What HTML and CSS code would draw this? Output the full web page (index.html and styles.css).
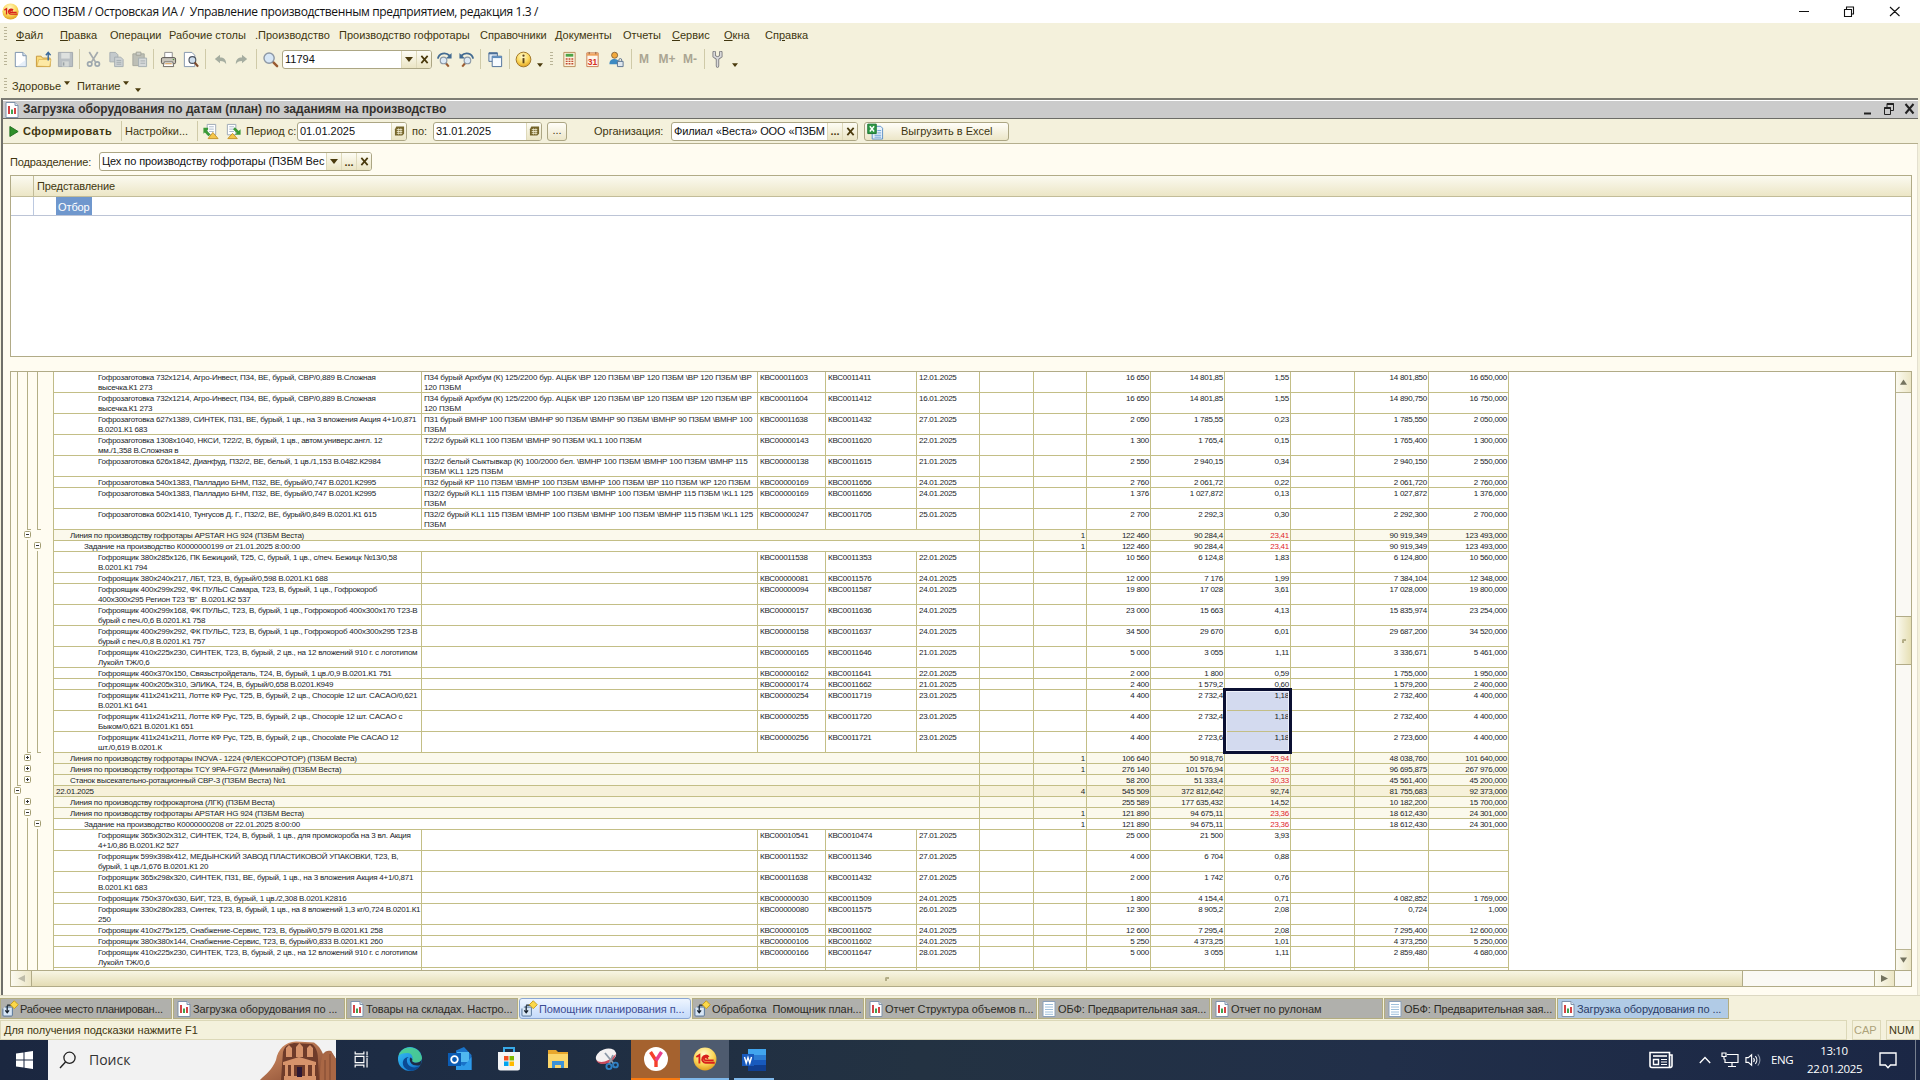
FILE: index.html
```
<!DOCTYPE html>
<html lang="ru">
<head>
<meta charset="utf-8">
<title>Управление производственным предприятием</title>
<link rel="stylesheet" href="styles.css">
</head>
<body>
<svg class="sprite" width="0" height="0">
  <defs>
    <radialGradient id="gold" cx="45%" cy="30%" r="70%"><stop offset="0" stop-color="#fffbd0"/><stop offset=".6" stop-color="#fbd75a"/><stop offset="1" stop-color="#e0a020"/></radialGradient>
    <linearGradient id="edgeg" x1="0" y1="0" x2="1" y2="1"><stop offset="0" stop-color="#35c1f1"/><stop offset=".6" stop-color="#1f8fe0"/><stop offset="1" stop-color="#0c59a4"/></linearGradient>
    <linearGradient id="rock" x1="0" y1="0" x2="1" y2="1"><stop offset="0" stop-color="#d99468"/><stop offset="1" stop-color="#7c412b"/></linearGradient>
  </defs>
  <symbol id="i-1c" viewBox="0 0 18 18"><circle cx="9" cy="9" r="8.6" fill="url(#gold)"/><path d="M2.500 7.500 4.800 6V12.300M11.800 7.500a2.700 2.700 0 1 0-2 4.300h6.500M10.800 9a1.200 1.200 0 1 0-1.300 1h6" fill="none" stroke="#d8201c" stroke-width="1.400"/></symbol>
  <symbol id="i-report" viewBox="0 0 16 16"><path d="M2 .5h9L14 3.500V15.500H2z" fill="#fff" stroke="#7f93ab"/><path d="M11 .5V3.500h3" fill="#dfe8f2" stroke="#7f93ab"/><path d="M5 4v8" stroke="#d03030" stroke-width="1.800"/><path d="M8 7.500V12" stroke="#2c9a3c" stroke-width="1.800"/><path d="M11 6v6" stroke="#d03030" stroke-width="1.800"/></symbol>
  <symbol id="i-doc" viewBox="0 0 16 16"><path d="M2 .5h12v15H2z" fill="#fff" stroke="#8aa0ba"/><path d="M4 3.500h8M4 6h8M4 8.500h8M4 11h8M4 13.300h8" stroke="#9fc0dc"/></symbol>
  <symbol id="i-proc" viewBox="0 0 18 18"><path d="M3 7.500h8v8.500a1 1 0 0 1-1 1H2a1 1 0 0 1-1-1V9" fill="#d8e6f5" stroke="#527298"/><path d="M5.500 6v7M3.500 11l2 2.500 2-2.500M5.500 5.500h5" fill="none" stroke="#15202c" stroke-width="1.300"/><path d="M13 .8 17.200 5 13 9.200 8.800 5z" fill="#fbd84a" stroke="#c79c1c"/></symbol>
  <symbol id="i-new" viewBox="0 0 18 18"><path d="M3.500 1.500h8l3.500 3.500v11.500H3.500z" fill="#fff" stroke="#7890ac"/><path d="M11.500 1.500V5H15" fill="#d5e2f0" stroke="#7890ac"/><path d="M5 16.500h10V9z" fill="#dce8f6" opacity=".7"/></symbol>
  <symbol id="i-open" viewBox="0 0 18 18"><path d="M1.500 5.500h5l1.500 2h8v9H1.500z" fill="#fbdc7a" stroke="#c7983a"/><path d="M2 16 4 9h13l-1.500 7.500z" fill="#fde9a4" stroke="#d3a743" stroke-width=".6"/><path d="M14 10V2M11.500 4.500 14 1.500l2.500 3" fill="none" stroke="#39699c" stroke-width="1.500"/></symbol>
  <symbol id="i-save" viewBox="0 0 18 18"><path d="M1.500 1.500h15v15h-15z" fill="#b9bfc3" stroke="#a2a9ad"/><path d="M4.500 2h9v6h-9z" fill="#dee1df"/><path d="M5.500 11h7v5.500h-7z" fill="#d4d8d6"/><path d="M7 12v3.500" stroke="#9aa2a6" stroke-width="1.600"/></symbol>
  <symbol id="i-cut" viewBox="0 0 18 18"><path d="M4.500 1 11 11.500M13.500 1 7 11.500" stroke="#a5abae" stroke-width="1.800"/><circle cx="5" cy="13.800" r="2.300" fill="none" stroke="#9da7ae" stroke-width="1.800"/><circle cx="13" cy="13.800" r="2.300" fill="none" stroke="#9da7ae" stroke-width="1.800"/></symbol>
  <symbol id="i-copy" viewBox="0 0 18 18"><path d="M2 1.500h6l2.500 2.500v7.500H2z" fill="#c4cacc" stroke="#a5adb1"/><path d="M7 6.500h6.500L16 9v7.500H7z" fill="#ccd1d3" stroke="#a5adb1"/><path d="M9 10h5M9 12h5M9 14h5" stroke="#a5adb1"/></symbol>
  <symbol id="i-paste" viewBox="0 0 18 18"><path d="M2 3h12v12.500H2z" fill="#bdbfb6" stroke="#a6a89d"/><path d="M5.500 1.200h5V4.500h-5z" fill="#cfd1cb" stroke="#a1a398"/><path d="M8 7.500h8.500v9H8z" fill="#d6d9d9" stroke="#a7afb3"/><path d="M10 10.500h5M10 13h5" stroke="#a7afb3"/></symbol>
  <symbol id="i-print" viewBox="0 0 18 18"><path d="M5 1.500h8V8H5z" fill="#fff" stroke="#8b8b8b"/><rect x="1.500" y="7" width="15" height="6.500" rx="1.500" fill="#c9c5bb" stroke="#54504a"/><path d="M4.500 11.500h9l1 5h-11z" fill="#fff" stroke="#6b675e"/><path d="M5.500 13.500h7" stroke="#d18f3e"/><path d="M13.500 9h1.500" stroke="#4e9c3c" stroke-width="1.300"/></symbol>
  <symbol id="i-preview" viewBox="0 0 18 18"><path d="M2.500 1.500h8l3 3v12H2.500z" fill="#fff" stroke="#8296ad"/><circle cx="11" cy="9.500" r="3.600" fill="#cfdfee" stroke="#4d5560" stroke-width="1.200"/><path d="M13.500 12.200 17 16.500" stroke="#7d4a2d" stroke-width="2.200"/></symbol>
  <symbol id="i-undo" viewBox="0 0 18 18"><path d="M3 8.500 8.500 4v3c4 0 6.500 2 6.500 7-1.500-2.500-3-3.500-6.500-3.500V13z" fill="#a5ada0"/></symbol>
  <symbol id="i-mag" viewBox="0 0 18 18"><path d="M11.500 11.500 16 16" stroke="#9a5b31" stroke-width="2.600" stroke-linecap="round"/><circle cx="7.500" cy="7.500" r="5.400" fill="#d7e7f6" stroke="#8d98a5" stroke-width="1.500"/></symbol>
  <symbol id="i-find" viewBox="0 0 18 18"><path d="M2 8C3 2.500 10 .5 14.500 5" fill="none" stroke="#436b92" stroke-width="2"/><path d="M16.500 2v6h-6z" fill="#436b92"/><path d="m10.500 13 3 3.500" stroke="#9a5b31" stroke-width="2.200"/><circle cx="8" cy="10" r="3.500" fill="#dce9f5" stroke="#8b98a6" stroke-width="1.200"/></symbol>
  <symbol id="i-wins" viewBox="0 0 18 18"><path d="M2 2h9v9H2z" fill="#e3edf8" stroke="#4c6f98"/><path d="M2 2.500h9" stroke="#4c6f98" stroke-width="2"/><path d="M5.500 5.500h10v11h-10z" fill="#f7fbff" stroke="#4c6f98"/><path d="M5.500 6.500h10" stroke="#5f8dbd" stroke-width="2"/></symbol>
  <symbol id="i-info" viewBox="0 0 18 18"><circle cx="9" cy="9" r="7.800" fill="url(#gold)" stroke="#9c7428"/><path d="M9 7.500v5.500" stroke="#5d421a" stroke-width="2"/><circle cx="9" cy="4.900" r="1.200" fill="#5d421a"/></symbol>
  <symbol id="i-calc" viewBox="0 0 18 18"><path d="M3 1.500h12v15H3z" fill="#fbf3dd" stroke="#b98d5a"/><path d="M5 3h8v3H5z" fill="#4da347"/><path d="M5 8.500h8M5 11h8M5 13.500h8" stroke="#c24b31" stroke-width="1.500" stroke-dasharray="2 1"/></symbol>
  <symbol id="i-cal" viewBox="0 0 18 18"><path d="M3 2h12v14.500H3z" fill="#fff6ec" stroke="#c97c51"/><path d="M3 2.500h12v2.500H3z" fill="#f0a35e"/><path d="M5.500 1v2.500M12.500 1v2.500" stroke="#8d5d38"/><text x="9" y="14.500" text-anchor="middle" font-family="Liberation Sans" font-size="9" font-weight="700" fill="#d42f22">31</text></symbol>
  <symbol id="i-user" viewBox="0 0 18 18"><circle cx="7" cy="4.500" r="3.200" fill="#f2a93c" stroke="#6e5330" stroke-width=".8"/><path d="M1.500 14c0-4 2-5.500 5.500-5.500 2 0 4 1 4.500 3V14z" fill="#3d8ac2"/><path d="M10 11h6v5.500h-6z" fill="#dfe7ee" stroke="#5b7390"/><path d="M11.500 11V9.500a1.500 1.500 0 0 1 3 0V11" fill="none" stroke="#5b7390"/></symbol>
  <symbol id="i-wrench" viewBox="0 0 18 18"><path d="M5.500 1.500v4L9 8l3.500-2.500v-4M9 8v8" fill="none" stroke="#77777a" stroke-width="3.600" stroke-linecap="round"/><path d="M5.500 1.500v4L9 8l3.500-2.500v-4M9 8v8" fill="none" stroke="#d9d9da" stroke-width="1.800" stroke-linecap="round"/></symbol>
  <symbol id="i-load" viewBox="0 0 18 18"><path d="M5.500 1.500h9v11h-9z" fill="#fff" stroke="#9aa7b5"/><path d="M7.500 4h5M7.500 6.500h5M7.500 9h5" stroke="#a8b8c8"/><path d="M1.500 5h5v2L5 8l4 4-2 2-4-4-1.500 1.500z" fill="#3a9a37"/><path d="m11.500 10 5.500 6.500H6.500z" fill="#f5c64a" stroke="#c39329"/></symbol>
  <symbol id="i-unload" viewBox="0 0 18 18"><path d="M2.500 1.500h9v11h-9z" fill="#fff" stroke="#9aa7b5"/><path d="M4.500 4h5M4.500 6.500h5M4.500 9h5" stroke="#a8b8c8"/><path d="M16.500 12.500h-6l2-2-4-4 2-2 4 4 2-2z" fill="#3a9a37"/><path d="m8 11 5 5.500H3z" fill="#f5c64a" stroke="#c39329"/></symbol>
  <symbol id="i-date" viewBox="0 0 12 12"><path d="M2.500 1H11v8L9 11H1V4z" fill="#75652a"/><path d="M3 4.500h6M3 6.500h6M3 8.500h6" stroke="#f2ecd0"/><path d="M5 3v7M7.500 3v7" stroke="#f2ecd0" stroke-width=".7"/></symbol>
  <symbol id="i-excel" viewBox="0 0 18 18"><path d="M5.500 3.500h9l2 2v11.500h-11z" fill="#e8f1fa" stroke="#5b8fc7"/><path d="M11 8h4M11 10.500h4M8 13h7M8 15h7" stroke="#6aa0d6"/><path d="M.8 1.200h9v10h-9z" fill="#2f9a47" stroke="#1b7231"/><path d="m3 3.500 4.500 5.500M7.500 3.500 3 9" stroke="#fff" stroke-width="1.500"/></symbol>
  <symbol id="i-x" viewBox="0 0 10 10"><path d="m1.500 1 7 8M8.500 1l-7 8" stroke="#4b3b0e" stroke-width="1.900"/></symbol>
  <symbol id="i-down" viewBox="0 0 8 5"><path d="M0 0h8L4 5z" fill="#4b3b0e"/></symbol>
</svg>

<div class="caption">
  <svg class="ic18"><use href="#i-1c"/></svg>
  <span class="caption-text">ООО ПЗБМ / Островская ИА /&nbsp; Управление производственным предприятием, редакция 1.3 /</span>
  <svg class="caption-buttons" viewBox="0 0 120 22"><g fill="none" stroke="#111" stroke-width="1.100"><path d="M12 10.500h10M57.500 8.500h7v7h-7zM59.500 8V6h7v7h-2M103 6l9.500 9M112.500 6l-9.500 9"/></g></svg>
</div>

<div class="menu">
  <i class="grip"></i><span><u>Ф</u>айл</span><span><u>П</u>равка</span><span>Операции</span><span>Рабочие столы</span><span>.Производство</span><span>Производство гофротары</span><span>Справочники</span><span><u>Д</u>окументы</span><span>Отчеты</span><span><u>С</u>ервис</span><span><u>О</u>кна</span><span>Сп<u>р</u>авка</span>
</div>

<div class="tools">
  <i class="grip"></i>
  <svg><use href="#i-new"/></svg><svg><use href="#i-open"/></svg><svg><use href="#i-save"/></svg><i class="sep"></i>
  <svg><use href="#i-cut"/></svg><svg><use href="#i-copy"/></svg><svg><use href="#i-paste"/></svg><i class="sep"></i>
  <svg><use href="#i-print"/></svg><svg><use href="#i-preview"/></svg><i class="sep"></i>
  <svg><use href="#i-undo"/></svg><svg class="flip"><use href="#i-undo"/></svg><i class="sep"></i>
  <svg><use href="#i-mag"/></svg>
  <div class="field"><span class="value">11794</span><b class="btn"><svg class="down"><use href="#i-down"/></svg></b><b class="btn"><svg class="x"><use href="#i-x"/></svg></b></div>
  <svg><use href="#i-find"/></svg><svg class="flip"><use href="#i-find"/></svg><i class="sep"></i>
  <svg><use href="#i-wins"/></svg><i class="sep"></i><svg><use href="#i-info"/></svg>
  <svg class="more"><use href="#i-down"/></svg><i class="grip"></i>
  <svg><use href="#i-calc"/></svg><svg><use href="#i-cal"/></svg><svg><use href="#i-user"/></svg><i class="sep"></i>
  <b class="mem">M</b><b class="mem">M+</b><b class="mem">M-</b><i class="sep"></i>
  <svg><use href="#i-wrench"/></svg><svg class="more"><use href="#i-down"/></svg>
</div>

<div class="extra">
  <i class="grip"></i><span>Здоровье</span><svg class="drop"><use href="#i-down"/></svg><span>Питание</span><svg class="drop"><use href="#i-down"/></svg><svg class="more"><use href="#i-down"/></svg>
</div>

<div class="window">
  <div class="window-title">
    <svg class="ic16"><use href="#i-report"/></svg><b>Загрузка оборудования по датам (план) по заданиям на производство</b>
    <svg class="window-buttons" viewBox="0 0 60 16"><path d="M6 12.500h7" stroke="#222" stroke-width="2"/><path d="M26.500 6.500h6v7h-6zM29 6V2.500h6.500v7H33" fill="none" stroke="#222"/><path d="M26.500 7h6M29 3h6.500" stroke="#222" stroke-width="2"/><path d="m47.500 3 8 9.500M55.500 3l-8 9.500" stroke="#222" stroke-width="2"/></svg>
  </div>
  <div class="commands">
    <svg class="play" viewBox="0 0 10 12"><path d="M.5.5 9.500 6 .5 11.500z" fill="#2f8f28" stroke="#1d6d1c"/></svg>
    <b class="run">Сформировать</b><i class="sep"></i><span class="settings">Настройки...</span><i class="sep"></i>
    <svg class="ic18"><use href="#i-load"/></svg><svg class="ic18"><use href="#i-unload"/></svg>
    <span>Период с:</span>
    <div class="field"><span class="value">01.01.2025</span><b class="btn"><svg class="date"><use href="#i-date"/></svg></b></div>
    <span class="to">по:</span>
    <div class="field"><span class="value">31.01.2025</span><b class="btn"><svg class="date"><use href="#i-date"/></svg></b></div>
    <div class="push dots">...</div>
    <span class="org">Организация:</span>
    <div class="field tight"><span class="value">Филиал «Веста» ООО «ПЗБМ</span><b class="btn">...</b><b class="btn"><svg class="x"><use href="#i-x"/></svg></b></div>
    <div class="push excel"><svg class="ic18"><use href="#i-excel"/></svg><span>Выгрузить в Excel</span></div>
  </div>
  <div class="form">
    <div class="dept"><span>Подразделение:</span>
      <div class="field tight"><span class="value">Цех по производству гофротары (ПЗБМ Вес</span><b class="btn"><svg class="down"><use href="#i-down"/></svg></b><b class="btn">...</b><b class="btn"><svg class="x"><use href="#i-x"/></svg></b></div>
    </div>
    <div class="filter">
      <div class="filter-head"><span></span><span>Представление</span></div>
      <div class="filter-row"><span></span><div><em>Отбор</em></div></div>
    </div>
    <div class="report">
      <div class="gutter"><svg width="42" height="598">
        <g fill="none" stroke="#b3ae86" shape-rendering="crispEdges">
          <path d="M6.500 0V413.500H10M6.500 424V598M16.500 0V157.500H20M26.500 0V157.500H30M16.500 168V380.500H20M26.500 179V380.500H30M16.500 446V598M26.500 457V598"/>
        </g>
        <g id="nodes"></g>
      </svg></div>
      <div class="sheet"><div id="rows"></div><i class="selection"></i></div>
      <div class="vscroll"><b class="arrow"><svg viewBox="0 0 8 6"><path d="M0 6h8L4 0z" fill="#74735f"/></svg></b><b class="thumb"><i class="nub"></i></b><b class="arrow"><svg viewBox="0 0 8 6"><path d="M0 0h8L4 6z" fill="#74735f"/></svg></b></div>
      <div class="hscroll"><b class="arrow"><svg viewBox="0 0 8 8"><path d="M8 0v8L0 4z" fill="#bdbba8"/></svg></b><b class="thumb"><i class="nub"></i></b><i></i><b class="arrow"><svg viewBox="0 0 8 8"><path d="M0 0v8l8-4z" fill="#74735f"/></svg></b><i class="corner"></i></div>
    </div>
  </div>
</div>

<div class="tabs">
  <div><svg class="ic18"><use href="#i-proc"/></svg><span class="narrow">Рабочее место планирован...</span></div>
  <div><svg class="ic16"><use href="#i-report"/></svg><span>Загрузка оборудования по ...</span></div>
  <div><svg class="ic16"><use href="#i-report"/></svg><span>Товары на складах. Настро...</span></div>
  <div class="hot"><svg class="ic18"><use href="#i-proc"/></svg><span>Помощник планирования п...</span></div>
  <div><svg class="ic18"><use href="#i-proc"/></svg><span>Обработка&nbsp; Помощник план...</span></div>
  <div><svg class="ic16"><use href="#i-report"/></svg><span>Отчет Структура объемов п...</span></div>
  <div><svg class="ic16"><use href="#i-doc"/></svg><span>ОБФ: Предварительная зая...</span></div>
  <div><svg class="ic16"><use href="#i-report"/></svg><span>Отчет по рулонам</span></div>
  <div><svg class="ic16"><use href="#i-doc"/></svg><span>ОБФ: Предварительная зая...</span></div>
  <div class="current"><svg class="ic16"><use href="#i-report"/></svg><span>Загрузка оборудования по ...</span></div>
</div>
<div class="status"><span class="hint">Для получения подсказки нажмите F1</span><span class="cap">CAP</span><span class="num">NUM</span></div>

<div class="taskbar">
  <div class="start"><svg width="18" height="18" viewBox="0 0 18 18"><path d="M0 2.500 7.500 1.500V8.500H0zM8.500 1.300 17 0V8.500H8.500zM0 9.500h7.500v7L0 15.500zM8.500 9.500H17V18L8.500 16.700z" fill="#fff"/></svg></div>
  <div class="search">
    <svg width="18" height="18" viewBox="0 0 18 18"><circle cx="10.500" cy="6.800" r="5.600" fill="none" stroke="#222" stroke-width="1.300"/><path d="M6.500 11 1 17" stroke="#222" stroke-width="1.400"/></svg>
    <span>Поиск</span>
    <svg class="petra" width="78" height="40" viewBox="0 0 78 40"><path d="M2 40C8 34 14 30 18 20 20 9 27 2 38 1.500l18 1C60 5 63 9 65 14c2-3 5-4 8-3l5 8v21z" fill="url(#rock)"/><path d="M23 40 25 12C27 5 31 4 36 3l18 1c5 4 6 10 6 16l1 20z" fill="#6f3b2a"/><g fill="#d7936b"><path d="M26 36h32v4H26zM25 22l16-5 17 5v3H25zM28 8l3-3 3 3v9h-6zM49 8l3-3 3 3v9h-6zM38 7l3.500-4L45 7v10h-7z"/><path d="M27 25h3v12h-3zM33 25h3v12h-3zM47 25h3v12h-3zM54 25h3v12h-3z"/></g><path d="M39 27h5v10h-5z" fill="#2c1834"/><path d="M65 14c-3 8-3 18-3 26h16V19l-5-8z" fill="#a96745"/><path d="M67 20v20M72 14v26" stroke="#7f4931"/></svg>
  </div>
  <div class="apps">
    <div><svg class="view" viewBox="0 0 24 24"><path d="M4 2v3h11V2M4 22v-3h11v3M4 8h11v8H4zM19 2v5M19 10v12M17.500 8.500h3" fill="none" stroke="#fff" stroke-width="1.500"/></svg></div>
    <div><svg viewBox="0 0 24 24"><circle cx="12" cy="12" r="12" fill="url(#edgeg)"/><path d="M.5 9C3-2.500 22-3 24 11c0 5-8 6-10 3 2-5-1-8-5-8C5 6 2 7 .5 9z" fill="#4fd18b" opacity=".85"/><path d="M9 12c-1 6 5 11 13 7-4 6-12 6-16 1-3-5 0-10 5-10-1 0-2 1-2 2z" fill="#0b4a94"/><path d="M12 10.500c2 .5 3 2 2 3.500 2 3 9 2 10-2l-1.500 6c-7 2-12-2-10.500-7.500z" fill="#1e2b44"/></svg></div>
    <div><svg viewBox="0 0 24 24"><path d="M8 3.500 16 0l7.500 8v15H8z" fill="#1a73c9"/><path d="M9 5h12v10H9z" fill="#50b8f0"/><path d="M8 15l8 4 7.500-9V23H8z" fill="#2e9be8"/><path d="M0 6h13v13H0z" fill="#0b5cb4"/><circle cx="6.500" cy="12.500" r="3.300" fill="none" stroke="#fff" stroke-width="1.800"/></svg></div>
    <div><svg viewBox="0 0 24 24"><path d="M7 6V1h10v5" fill="none" stroke="#38a9e8" stroke-width="2"/><path d="M1 5h22v16a2.500 2.500 0 0 1-2.500 2.500h-17A2.500 2.500 0 0 1 1 21z" fill="#f4f5f7"/><path d="M7 9h4.500v4.500H7z" fill="#f25022"/><path d="M12.500 9H17v4.500h-4.500z" fill="#7fba00"/><path d="M7 14.500h4.500V19H7z" fill="#00a4ef"/><path d="M12.500 14.500H17V19h-4.500z" fill="#ffb900"/></svg></div>
    <div><svg viewBox="0 0 24 24"><path d="M2 3h8l2 2h10v16H2z" fill="#e8a72c"/><path d="M2 7h20v14H2z" fill="#fbd66b"/><path d="M6 21v-7h12v7h-3v-3H9v3z" fill="#3c92d8"/></svg></div>
    <div><svg viewBox="0 0 24 24"><ellipse cx="11" cy="9" rx="10.500" ry="7" transform="rotate(-20 11 9)" fill="#f4f1f2"/><path d="M1 13c4 4 13 2 20-6-1 6-7 10-13 10-4 0-6-2-7-4z" fill="#c8485a"/><path d="M10 6l9 11M18 8l-4 9" stroke="#8d99a8" stroke-width="1.800"/><circle cx="14" cy="19.500" r="2.600" fill="none" stroke="#2f81c4" stroke-width="1.900"/><circle cx="20.500" cy="18" r="2.400" fill="none" stroke="#2f81c4" stroke-width="1.900"/></svg></div>
    <div class="yandex"><svg viewBox="0 0 24 24"><circle cx="12" cy="12" r="12" fill="#fff"/><path d="m6.500 5 5.500 8.500V20" fill="none" stroke="#f5402c" stroke-width="3.400"/><path d="M12 13.500 17.500 5" stroke="#e8408c" stroke-width="3.400"/></svg></div>
    <div class="active"><svg viewBox="0 0 18 18"><use href="#i-1c"/></svg></div>
    <div class="word"><svg viewBox="0 0 24 24"><path d="M6 1h18v6H6z" fill="#41a5ee"/><path d="M6 7h18v5H6z" fill="#2b7cd3"/><path d="M6 12h18v5H6z" fill="#185abd"/><path d="M6 17h18v6H6z" fill="#103f91"/><path d="M0 6h12v12H0z" fill="#185abd"/><path d="m2.500 9 1.700 6L6 9.500 7.800 15l1.700-6" fill="none" stroke="#fff" stroke-width="1.400"/></svg></div>
  </div>
  <div class="tray">
    <svg class="news" viewBox="0 0 24 18"><path d="M1 1.500h19.500V16.500H3A2 2 0 0 1 1 14.500zM20.500 4H23v11a1.500 1.500 0 0 1-2.500 1" fill="none" stroke="#fff" stroke-width="1.600"/><path d="M4 5h14" stroke="#fff" stroke-width="1.600"/><path d="M4.500 8.500h5v5h-5z" fill="none" stroke="#fff" stroke-width="1.400"/><path d="M12 8.500h6M12 11h6M12 13.500h6" stroke="#fff"/></svg>
    <svg class="chev" viewBox="0 0 12 8"><path d="m.8 7 5.200-5.500L11.200 7" fill="none" stroke="#fff" stroke-width="1.300"/></svg>
    <svg class="net" viewBox="0 0 18 16"><path d="M6 2.500h11v8H4V7M11 10.500V14M7 14.500h8M1 1h4v3.500H1zM3 4.500v3" fill="none" stroke="#fff" stroke-width="1.200"/></svg>
    <svg class="snd" viewBox="0 0 18 14"><path d="M1 4.500h2.500L7 1.500v11L3.500 9.500H1zM9 5a3 3 0 0 1 0 4M11 3a6 6 0 0 1 0 8" fill="none" stroke="#fff" stroke-width="1.200"/><path d="M13.500 1a9 9 0 0 1 0 12" fill="none" stroke="#8b95a6" stroke-width="1.200"/></svg>
    <span class="lang">ENG</span>
    <span class="clock">13:10<br>22.01.2025</span>
    <svg class="note" viewBox="0 0 18 17"><path d="M1 1h16v12h-5.500L9 15.800 6.500 13H1z" fill="none" stroke="#fff" stroke-width="1.400"/></svg>
    <i class="peek"></i>
  </div>
</div>
<script src="app.js"></script>
</body>
</html>
```
FILE: styles.css
```
* { box-sizing: border-box; }
body { margin: 0; width: 1920px; height: 1080px; overflow: hidden; background: #f4f1dc; color: #40360f; font: 11px/14px "Liberation Sans", Arial, sans-serif; display: flex; flex-direction: column; }
span, b { white-space: nowrap; }
.sprite { position: absolute; }
.ic16 { width: 16px; height: 16px; flex: none; }
.ic18 { width: 17px; height: 17px; flex: none; }
.sep { width: 1px; height: 20px; background: #cfcaa8; justify-self: center; flex: none; }
.grip { width: 3px; height: 15px; margin-left: 4px; background: repeating-linear-gradient(#b9b497 0 1px, transparent 1px 3px); }
.flip { transform: scaleX(-1); }

.caption { height: 23px; flex: none; background: #fff; display: flex; align-items: center; padding-left: 2px; color: #111; }
.caption-text { font: 12px/20px "Open Sans", sans-serif; margin-left: 4px; flex: 1; letter-spacing: -.35px; }
.caption-buttons { width: 120px; height: 22px; margin-right: 13px; }

.menu { height: 23px; flex: none; display: grid; align-items: center; grid-template-columns: 16px 44px 50px 59px 86px 84px 141px 75px 68px 49px 52px 41px 60px; }
.tools { height: 26px; flex: none; display: grid; align-items: center; grid-template-columns: 9px 23px 22px 22px 6px 23px 23px 22px 7px 22px 22px 8px 22px 21px 8px 21px 152px 22px 22px 7px 22px 6px 22px 12px 12px 22px 24px 24px 6px 20px 26px 20px 8px 18px 18px; }
.tools > svg { width: 17px; height: 17px; justify-self: center; }
.tools > .field { margin: 0 1px; }
.tools > svg.more, .extra > svg.more { width: 6px; height: 4px; align-self: end; margin-bottom: 5px; }
.mem { color: #aaa592; font-size: 12px; text-align: center; }
.extra { height: 26px; flex: none; display: grid; align-items: center; padding-top: 1px; grid-template-columns: 12px 52px 13px 46px 10px 11px; }
.extra > svg { width: 6px; height: 4px; }
.extra > svg.drop { margin-bottom: 5px; }
.extra > svg.more { margin-left: 2px; margin-bottom: 6px; }

.field { height: 19px; display: flex; background: #fff; border: 1px solid #aca684; border-radius: 3px; overflow: hidden; color: #101010; }
.value { flex: 1; padding-left: 2px; line-height: 17px; overflow: hidden; }
.tight .value { letter-spacing: -.12px; }
.btn { width: 15px; background: linear-gradient(#fdfcf4, #ebe5c4); border-left: 1px solid #ded9ba; display: flex; align-items: center; justify-content: center; color: #4b3b0e; flex: none; }
.down { width: 8px; height: 5px; }
.x { width: 9px; height: 9px; }
.date { width: 11px; height: 12px; }

.window { height: 897px; flex: none; border-top: 2px solid #7d7d74; border-left: 2px solid #6f6f6a; margin: 0 2px 0 1px; display: flex; flex-direction: column; }
.window-title { height: 19px; flex: none; background: #cbcbcb; border-top: 1px solid #fff; border-bottom: 1px solid #6c6c66; display: flex; align-items: center; padding-left: 1px; color: #33302c; }
.window-title b { margin-left: 3px; flex: 1; font-size: 12px; line-height: 14px; letter-spacing: .03px; margin-top: -1px; }
.window-buttons { width: 60px; height: 16px; margin: -1px 0 0; }
.commands { height: 25px; flex: none; background: #f4f1dc; border-bottom: 1px solid #b5af8e; display: grid; align-items: center; grid-template-columns: 6px 14px 94px 8px 67px 10px 23px 21px 51px 110px 26px 109px 5px 47px 77px 187px 6px 145px; }
.commands > .play { width: 10px; height: 11px; grid-column: 2; }
.run { letter-spacing: .45px; }
.push { height: 19px; border: 1px solid #aca684; border-radius: 3px; background: linear-gradient(#fffef9, #ece6c8); }
.dots { width: 20px; text-align: center; line-height: 15px; grid-column: 14; }
.commands .to { padding-left: 5px; }
.excel { grid-column: 18; display: flex; align-items: center; padding-left: 2px; }
.excel span { margin-left: 17px; }
.form { flex: 1; background: #fffcf1; padding: 8px 5px 0 7px; border-right: 1px solid #e4e0cf; }
.dept { display: grid; grid-template-columns: 89px 273px; align-items: center; height: 19px; }
.dept > span { letter-spacing: -.15px; }
.dept .value { letter-spacing: -.08px; }
.filter { margin-top: 4px; height: 182px; background: #fff; border: 1px solid #b1ab87; }
.filter-head { height: 21px; border-bottom: 1px solid #c2bc99; background: linear-gradient(#fbfaf0, #ece6c6); display: grid; grid-template-columns: 22px 1fr; line-height: 20px; letter-spacing: -.1px; }
.filter-head span + span { border-left: 1px solid #c2bc99; padding-left: 3px; }
.filter-row { height: 19px; border-bottom: 1px solid #bcc4d6; display: grid; grid-template-columns: 22px 1fr; }
.filter-row div { border-left: 1px solid #bcc9e0; padding-left: 22px; }
.filter-row em { display: block; width: 36px; height: 18px; background: #6f97cd; color: #fff; font-style: normal; line-height: 20px; padding-left: 2px; letter-spacing: -.1px; }

.report { margin-top: 14px; height: 616px; border: 1px solid #b1ab87; background: #fff; display: grid; grid-template: 598px 16px / 43px 1fr 16px; }
.gutter { background: #fffcf1; border-right: 1px solid #c0bb88; }
.gutter svg { display: block; }
.sheet { position: relative; overflow: hidden; height: 598px; color: #191d28; font-size: 8px; line-height: 10px; }
.row { display: grid; grid-template-columns: 368px 336px 68px 91px 63px 54px 53px 64px 74px 66px 64px 74px 80px; width: 1455px; height: 11px; }
.row.tall { height: 21px; }
.row div { border-right: 1px solid #c3be86; border-bottom: 1px solid #c3be86; padding: 1px 2px 0; height: 100%; min-height: 0; white-space: pre; letter-spacing: -.25px; }
.row .n { text-align: right; padding-right: 1px; letter-spacing: -.26px; }
.row .name { padding-left: 44px; letter-spacing: -.23px; }
.row .comp { letter-spacing: -.14px; }
.row .merged { grid-column: span 5; letter-spacing: -.22px; }
.date0 { background: #f6f1da; }
.line { background: #fbf9ec; }
.line .merged { padding-left: 16px; }
.job .merged { padding-left: 30px; }
.row .over { color: #e0262c; }
.row .picked { background: #d3daef; }
.selection { position: absolute; left: 1169px; top: 316px; width: 69px; height: 66px; border: 3px solid #0b1033; outline: 1px solid #eef1fa; outline-offset: -4px; }
.vscroll { border-left: 1px solid #b1ab87; background: #faf9f4; display: grid; grid-template-rows: 21px 223px 49px 1fr 21px; }
.thumb { display: flex; align-items: center; justify-content: center; }
.nub { width: 4px; height: 4px; border: solid #b3ad86; border-width: 2px 0 0 2px; border-radius: 2px 0 0; }
.vscroll .thumb { grid-row: 3; border: solid #b1ab87; border-width: 1px 0; background: linear-gradient(90deg, #fbfaf0, #e6dfb4); }
.arrow { display: flex; align-items: center; justify-content: center; background: linear-gradient(90deg, #fbfaf0, #ece6c6); border-bottom: 1px solid #b9b492; }
.vscroll .arrow:last-child { grid-row: 5; border: 0; border-top: 1px solid #b9b492; }
.arrow svg { width: 7px; height: 6px; }
.hscroll { grid-column: 1 / 4; border-top: 1px solid #b1ab87; background: #faf9f4; display: grid; grid-template-columns: 21px 1711px 1fr 21px 16px; }
.hscroll .arrow { border: solid #b1ab87; border-width: 0 1px 0 0; }
.hscroll i + .arrow { border-width: 0 1px; }
.hscroll .thumb { border-right: 1px solid #b1ab87; background: linear-gradient(#f8f6e4, #e4dcb4); }
.hscroll svg { height: 7px; }

.tabs { height: 25px; flex: none; padding-top: 2px; border-top: 1px solid #dcd8c2; display: grid; grid-template-columns: repeat(10, 172px); column-gap: 1px; }
.tabs div { height: 21px; background: #b0b0ac; border: 1px solid #b3ad80; display: flex; align-items: center; color: #2c2a24; padding-left: 2px; }
.tabs div:has(.ic18) { padding-left: 1px; }
.tabs span { margin-left: 1px; letter-spacing: -.1px; }
.tabs .narrow { letter-spacing: -.25px; }
.tabs .hot { background: linear-gradient(#eef5ff, #c4dafa); border-color: #8aa6d2; border-radius: 3px; color: #3c4c94; }
.tabs .current { background: #b1cbe6; color: #2b3c66; }
.status { height: 20px; flex: none; display: grid; grid-template-columns: 1847px 29px 34px; column-gap: 5px; padding-bottom: 1px; line-height: 18px; }
.status span { border: 1px solid #dcd8b8; padding-left: 3px; }
.status .cap { color: #ada27a; padding-left: 1px; }
.status .num { padding-left: 2px; }

.taskbar { height: 40px; flex: none; display: flex; background: linear-gradient(90deg, #1b2740, #1d2c44 20%, #233242 48%, #212f49 72%, #1b2745); color: #fff; font-family: "Open Sans", sans-serif; }
.start { width: 48px; flex: none; display: flex; align-items: center; padding-left: 16px; }
.search { width: 288px; flex: none; background: #f2f2f2; display: flex; align-items: center; padding-left: 11px; color: #333; font-size: 14px; }
.search span { margin-left: 12px; flex: 1; }
.search svg { flex: none; }
.apps { display: grid; grid-template-columns: 46px 51px repeat(4, 49px) 49px 49px 49px; padding-left: 2px; }
.apps div { display: flex; align-items: center; justify-content: center; border-bottom: 2px solid transparent; }
.apps svg { width: 24px; height: 24px; }
.apps svg.view { width: 19px; height: 19px; }
.apps .yandex { background: #a5622f; border-color: #f97a10; }
.apps .active { background: #4e5b6f; border-color: #7fb8ea; }
.apps .word { background: linear-gradient(#7fb8ea, #7fb8ea) 50% 100% / 40px 2px no-repeat; border: 0; }
.tray { margin-left: auto; display: grid; align-items: center; grid-template-columns: 50px 22px 24px 26px 36px 54px 54px 5px; }
.tray .news { width: 24px; height: 18px; }
.tray .chev { width: 12px; height: 8px; }
.tray .net { width: 18px; height: 16px; }
.tray .snd { width: 17px; height: 14px; }
.tray span { font-size: 11.500px; letter-spacing: -.35px; }
.clock { text-align: center; line-height: 18px; }
.tray .note { width: 18px; height: 17px; justify-self: center; }
.peek { height: 40px; border-left: 1px solid #77808f; }
```
FILE: app.js
```
// One report line per record. Item: name|composition|order|task|date|qty|area|hours|fact area|fact qty.
// Group (prefix D, L or J): title|count|qty|area|hours|fact area|fact qty. "~" is a line break inside a cell.
const source = String.raw`
Гофрозаготовка 732х1214, Агро-Инвест, П34, ВЕ, бурый, СВР/0,889 В.Сложная~высечка.К1 273|П34 бурый Архбум (К) 125/2200 бур. АЦБК \ВР 120 ПЗБМ \ВР 120 ПЗБМ \ВР 120 ПЗБМ \ВР~120 ПЗБМ|КВС00011603|КВС0011411|12.01.2025|16 650|14 801,85|1,55|14 801,850|16 650,000
Гофрозаготовка 732х1214, Агро-Инвест, П34, ВЕ, бурый, СВР/0,889 В.Сложная~высечка.К1 273|П34 бурый Архбум (К) 125/2200 бур. АЦБК \ВР 120 ПЗБМ \ВР 120 ПЗБМ \ВР 120 ПЗБМ \ВР~120 ПЗБМ|КВС00011604|КВС0011412|16.01.2025|16 650|14 801,85|1,55|14 890,750|16 750,000
Гофрозаготовка 627х1389, СИНТЕК, П31, ВЕ, бурый, 1 цв., на 3 вложения Акция 4+1/0,871~В.0201.К1 683|П31 бурый ВМНР 100 ПЗБМ \ВМНР 90 ПЗБМ \ВМНР 90 ПЗБМ \ВМНР 90 ПЗБМ \ВМНР 100~ПЗБМ|КВС00011638|КВС0011432|27.01.2025|2 050|1 785,55|0,23|1 785,550|2 050,000
Гофрозаготовка 1308х1040, НКСИ, Т22/2, В, бурый, 1 цв., автом.универс.англ. 12~мм./1,358 В.Сложная в|Т22/2 бурый KL1 100 ПЗБМ \ВМНР 90 ПЗБМ \KL1 100 ПЗБМ|КВС00000143|КВС0011620|22.01.2025|1 300|1 765,4|0,15|1 765,400|1 300,000
Гофрозаготовка 626х1842, Дианфуд, П32/2, ВЕ, белый, 1 цв./1,153 В.0482.К2984|П32/2 белый Сыктывкар (К) 100/2000 бел. \ВМНР 100 ПЗБМ \ВМНР 100 ПЗБМ \ВМНР 115~ПЗБМ \KL1 125 ПЗБМ|КВС00000138|КВС0011615|21.01.2025|2 550|2 940,15|0,34|2 940,150|2 550,000
Гофрозаготовка 540х1383, Палладио БНМ, П32, ВЕ, бурый/0,747 В.0201.К2995|П32 бурый КР 110 ПЗБМ \ВМНР 100 ПЗБМ \ВМНР 100 ПЗБМ \ВР 110 ПЗБМ \КР 120 ПЗБМ|КВС00000169|КВС0011656|24.01.2025|2 760|2 061,72|0,22|2 061,720|2 760,000
Гофрозаготовка 540х1383, Палладио БНМ, П32, ВЕ, бурый/0,747 В.0201.К2995|П32/2 бурый KL1 115 ПЗБМ \ВМНР 100 ПЗБМ \ВМНР 100 ПЗБМ \ВМНР 115 ПЗБМ \KL1 125~ПЗБМ|КВС00000169|КВС0011656|24.01.2025|1 376|1 027,872|0,13|1 027,872|1 376,000
Гофрозаготовка 602х1410, Тунгусов Д. Г., П32/2, ВЕ, бурый/0,849 В.0201.К1 615|П32/2 бурый KL1 115 ПЗБМ \ВМНР 100 ПЗБМ \ВМНР 100 ПЗБМ \ВМНР 115 ПЗБМ \KL1 125~ПЗБМ|КВС00000247|КВС0011705|25.01.2025|2 700|2 292,3|0,30|2 292,300|2 700,000
L:Линия по производству гофротары APSTAR HG 924 (ПЗБМ Веста)|1|122 460|90 284,4|!23,41|90 919,349|123 493,000
J:Задание на производство К0000000199 от 21.01.2025 8:00:00|1|122 460|90 284,4|!23,41|90 919,349|123 493,000
Гофроящик 380х285х126, ПК Бежицкий, Т25, С, бурый, 1 цв., с/печ. Бежицк №13/0,58~В.0201.К1 794||КВС00011538|КВС0011353|22.01.2025|10 560|6 124,8|1,83|6 124,800|10 560,000
Гофроящик 380х240х217, ЛБТ, Т23, В, бурый/0,598 В.0201.К1 688||КВС00000081|КВС0011576|24.01.2025|12 000|7 176|1,99|7 384,104|12 348,000
Гофроящик 400х299х292, ФК ПУЛЬС Самара, Т23, В, бурый, 1 цв., Гофрокороб~400х300х295 Регион Т23 "В"  В.0201.К2 537||КВС00000094|КВС0011587|24.01.2025|19 800|17 028|3,61|17 028,000|19 800,000
Гофроящик 400х299х168, ФК ПУЛЬС, Т23, В, бурый, 1 цв., Гофрокороб 400х300х170 Т23-В~бурый с печ./0,6 В.0201.К1 758||КВС00000157|КВС0011636|24.01.2025|23 000|15 663|4,13|15 835,974|23 254,000
Гофроящик 400х299х292, ФК ПУЛЬС, Т23, В, бурый, 1 цв., Гофрокороб 400х300х295 Т23-В~бурый с печ./0,8 В.0201.К1 757||КВС00000158|КВС0011637|24.01.2025|34 500|29 670|6,01|29 687,200|34 520,000
Гофроящик 410х225х230, СИНТЕК, Т23, В, бурый, 2 цв., на 12 вложений 910 г. с логотипом~Лукойл ТЖ/0,6||КВС00000165|КВС0011646|21.01.2025|5 000|3 055|1,11|3 336,671|5 461,000
Гофроящик 460х370х150, Связьстройдеталь, Т24, В, бурый, 1 цв./0,9 В.0201.К1 751||КВС00000162|КВС0011641|22.01.2025|2 000|1 800|0,59|1 755,000|1 950,000
Гофроящик 400х205х310, ЭЛИКА, Т24, В, бурый/0,658 В.0201.К949||КВС00000174|КВС0011662|21.01.2025|2 400|1 579,2|0,60|1 579,200|2 400,000
Гофроящик 411х241х211, Лотте КФ Рус, Т25, В, бурый, 2 цв., Chocopie 12 шт. CACAO/0,621~В.0201.К1 641||КВС00000254|КВС0011719|23.01.2025|4 400|2 732,4|*1,18|2 732,400|4 400,000
Гофроящик 411х241х211, Лотте КФ Рус, Т25, В, бурый, 2 цв., Chocopie 12 шт. CACAO с~Быком/0,621 В.0201.К1 651||КВС00000255|КВС0011720|23.01.2025|4 400|2 732,4|*1,18|2 732,400|4 400,000
Гофроящик 411х241х211, Лотте КФ Рус, Т25, В, бурый, 2 цв., Chocolate Pie CACAO 12~шт./0,619 В.0201.К||КВС00000256|КВС0011721|23.01.2025|4 400|2 723,6|*1,18|2 723,600|4 400,000
L:Линия по производству гофротары INOVA - 1224 (ФЛЕКСОРОТОР) (ПЗБМ Веста)|1|106 640|50 918,76|!23,94|48 038,760|101 640,000
L:Линия по производству гофротары TCY 9PA-FG72 (Минилайн) (ПЗБМ Веста)|1|276 140|101 576,94|!34,78|96 695,875|267 976,000
L:Станок высекательно-ротационный СВР-3 (ПЗБМ Веста) №1||58 200|51 333,4|!30,33|45 561,400|45 200,000
D:22.01.2025|4|545 509|372 812,642|92,74|81 755,683|92 373,000
L:Линия по производству гофрокартона (ЛГК) (ПЗБМ Веста)||255 589|177 635,432|14,52|10 182,200|15 700,000
L:Линия по производству гофротары APSTAR HG 924 (ПЗБМ Веста)|1|121 890|94 675,11|!23,36|18 612,430|24 301,000
J:Задание на производство К0000000208 от 22.01.2025 8:00:00|1|121 890|94 675,11|!23,36|18 612,430|24 301,000
Гофроящик 365х302х312, СИНТЕК, Т24, В, бурый, 1 цв., для промокороба на 3 вл. Акция~4+1/0,86 В.0201.К2 527||КВС00010541|КВС0010474|27.01.2025|25 000|21 500|3,93||
Гофроящик 599х398х412, МЕДЫНСКИЙ ЗАВОД ПЛАСТИКОВОЙ УПАКОВКИ, Т23, В,~бурый, 1 цв./1,676 В.0201.К1 20||КВС00011532|КВС0011346|27.01.2025|4 000|6 704|0,88||
Гофроящик 365х298х320, СИНТЕК, П31, ВЕ, бурый, 1 цв., на 3 вложения Акция 4+1/0,871~В.0201.К1 683||КВС00011638|КВС0011432|27.01.2025|2 000|1 742|0,76||
Гофроящик 750х370х630, БИГ, Т23, В, бурый, 1 цв./2,308 В.0201.К2816||КВС00000030|КВС0011509|24.01.2025|1 800|4 154,4|0,71|4 082,852|1 769,000
Гофроящик 330х280х283, Синтек, Т23, В, бурый, 1 цв., на 8 вложений 1,3 кг/0,724 В.0201.К1~250||КВС00000080|КВС0011575|26.01.2025|12 300|8 905,2|2,08|0,724|1,000
Гофроящик 410х275х125, Снабжение-Сервис, Т23, В, бурый/0,579 В.0201.К1 258||КВС00000105|КВС0011602|24.01.2025|12 600|7 295,4|2,08|7 295,400|12 600,000
Гофроящик 380х380х144, Снабжение-Сервис, Т23, В, бурый/0,833 В.0201.К1 260||КВС00000106|КВС0011602|24.01.2025|5 250|4 373,25|1,01|4 373,250|5 250,000
Гофроящик 410х225х230, СИНТЕК, Т23, В, бурый, 2 цв., на 12 вложений 910 г. с логотипом~Лукойл ТЖ/0,6||КВС00000166|КВС0011647|28.01.2025|5 000|3 055|1,11|2 859,480|4 680,000
||||||||||`;

const rows = document.getElementById('rows');
const kinds = { D: 'date0', L: 'line', J: 'job' };

function cell(row, text, cls) {
  const el = document.createElement('div');
  if (cls) el.className = cls;
  if (text[0] === '!') { el.classList.add('over'); text = text.slice(1); }
  if (text[0] === '*') { el.classList.add('picked'); text = text.slice(1); }
  el.textContent = text.replace(/~/g, '\n');
  row.append(el);
}

source.trim().split('\n').forEach(record => {
  const row = document.createElement('div');
  const group = record[1] === ':' ? kinds[record[0]] : '';
  const f = (group ? record.slice(2) : record).split('|');
  row.className = 'row ' + (group || (record.includes('~') ? 'tall' : ''));
  if (group) {
    cell(row, f[0], 'merged');
    cell(row, '');
    f.slice(1, 5).forEach(v => cell(row, v, 'n'));
    cell(row, '');
    f.slice(5).forEach(v => cell(row, v, 'n'));
  } else {
    cell(row, f[0], 'name');
    cell(row, f[1], 'comp');
    f.slice(2, 5).forEach(v => cell(row, v));
    cell(row, '');
    cell(row, '');
    f.slice(5, 8).forEach(v => cell(row, v, 'n'));
    cell(row, '');
    f.slice(8, 10).forEach(v => cell(row, v, 'n'));
  }
  rows.append(row);
});

// Tree toggles: [x, y, collapsed]
const toggles = [[16, 162, 0], [26, 173, 0], [16, 385, 1], [16, 396, 1], [16, 407, 1], [6, 418, 0], [16, 429, 1], [16, 440, 0], [26, 451, 0]];
document.getElementById('nodes').innerHTML = toggles.map(([x, y, plus]) =>
  `<rect x="${x - 2.5}" y="${y - 2.5}" width="6" height="6" rx="1" fill="#fff" stroke="#a39d72"/>` +
  `<path d="M${x - 1} ${y + .5}h3${plus ? `M${x + .5} ${y - 1}v3` : ''}" stroke="#333"/>`).join('');
```
